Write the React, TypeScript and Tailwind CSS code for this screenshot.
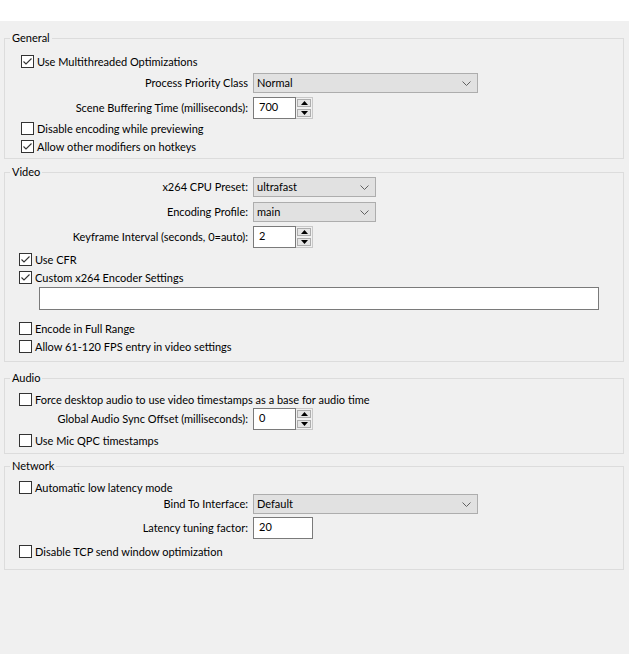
import React from "react";

function Check({ checked, label, className = "" }: { checked?: boolean; label: string; className?: string }) {
  return (
    <div className={`flex h-[13px] items-center gap-[3px] ${className}`}>
      <span className="flex h-[13px] w-[13px] shrink-0 items-center justify-center border border-[#333333] bg-white">
        {checked && (
          <svg width="11" height="11" viewBox="0 0 11 11">
            <path d="M1.5 5.5 L4 8 L9.5 2.5" fill="none" stroke="#333333" strokeWidth="1.1" />
          </svg>
        )}
      </span>
      <span className="whitespace-nowrap leading-[13px]">{label}</span>
    </div>
  );
}

function Row({ label, children, className = "" }: { label: string; children: React.ReactNode; className?: string }) {
  return (
    <div className={`flex h-fit items-center ${className}`}>
      <div className="w-[243px] whitespace-nowrap text-right leading-[14px]">{label}</div>
      <div className="ml-[5px] flex">{children}</div>
    </div>
  );
}

function Combo({ value, wide }: { value: string; wide?: boolean }) {
  return (
    <div
      className={`flex h-[20px] items-center justify-between border border-[#adadad] bg-[#e1e1e1] pl-[3px] pr-[6px] ${
        wide ? "w-[225px]" : "w-[123px]"
      }`}
    >
      <span>{value}</span>
      <svg width="9" height="5" viewBox="0 0 9 5">
        <path d="M0.5 0.5 L4.5 4.5 L8.5 0.5" fill="none" stroke="#606060" strokeWidth="1" />
      </svg>
    </div>
  );
}

function Spin({ value }: { value: string }) {
  return (
    <div className="flex h-[22px] w-[60px]">
      <div className="flex w-[43px] items-start border border-[#7a7a7a] bg-white pl-[5px] pt-[2px]">{value}</div>
      <div className="flex w-[17px] flex-col gap-[2px] border border-l-0 border-[#c8c8c8] bg-[#f0f0f0] p-[1px]">
        <div className="flex flex-1 items-center justify-center border border-[#adadad] bg-[#e5e5e5]">
          <svg width="7" height="4" viewBox="0 0 7 4">
            <path d="M3.5 0 L7 4 L0 4 Z" fill="#000" />
          </svg>
        </div>
        <div className="flex flex-1 items-center justify-center border border-[#adadad] bg-[#e5e5e5]">
          <svg width="7" height="4" viewBox="0 0 7 4">
            <path d="M0 0 L7 0 L3.5 4 Z" fill="#000" />
          </svg>
        </div>
      </div>
    </div>
  );
}

function Group({ title, className = "", children }: { title: string; className?: string; children: React.ReactNode }) {
  return (
    <fieldset className={`ml-[4px] w-[620px] border border-[#dcdcdc] ${className}`}>
      <legend className="ml-[5px] px-[2px] leading-[10px]">{title}</legend>
      {children}
    </fieldset>
  );
}

export default function App() {
  return (
    <div className="flex h-[654px] w-[629px] flex-col bg-[#f0f0f0] font-['Lato',sans-serif] text-[11px] leading-[14px] text-black">
      <div className="h-[21px] bg-white" />

      {/* General */}
      <Group title="General" className="mt-[12px] pb-[5px]">
        <Check checked label="Use Multithreaded Optimizations" className="ml-[16px] mt-[12px]" />
        <Row label="Process Priority Class" className="mt-[5px]">
          <Combo value="Normal" wide />
        </Row>
        <Row label="Scene Buffering Time (milliseconds):" className="mt-[4px]">
          <Spin value="700" />
        </Row>
        <Check label="Disable encoding while previewing" className="ml-[16px] mt-[3px]" />
        <Check checked label="Allow other modifiers on hotkeys" className="ml-[16px] mt-[5px]" />
      </Group>

      {/* Video */}
      <Group title="Video" className="mt-[8px] pb-[8px]">
        <Row label="x264 CPU Preset:">
          <Combo value="ultrafast" />
        </Row>
        <Row label="Encoding Profile:" className="mt-[5px]">
          <Combo value="main" />
        </Row>
        <Row label="Keyframe Interval (seconds, 0=auto):" className="mt-[4px]">
          <Spin value="2" />
        </Row>
        <Check checked label="Use CFR" className="ml-[14px] mt-[5px]" />
        <Check checked label="Custom x264 Encoder Settings" className="ml-[14px] mt-[5px]" />
        <div className="ml-[34px] mt-[3px] h-[23px] w-[560px] border border-[#7a7a7a] bg-white" />
        <Check label="Encode in Full Range" className="ml-[14px] mt-[12px]" />
        <Check label="Allow 61-120 FPS entry in video settings" className="ml-[14px] mt-[5px]" />
      </Group>

      {/* Audio */}
      <Group title="Audio" className="mt-[11px] pb-[6px]">
        <Check label="Force desktop audio to use video timestamps as a base for audio time" className="ml-[14px] mt-[10px]" />
        <Row label="Global Audio Sync Offset (milliseconds):" className="mt-[2px]">
          <Spin value="0" />
        </Row>
        <Check label="Use Mic QPC timestamps" className="ml-[14px] mt-[4px]" />
      </Group>

      {/* Network */}
      <Group title="Network" className="mt-[7px] pb-[11px]">
        <Check label="Automatic low latency mode" className="ml-[14px] mt-[10px]" />
        <Row label="Bind To Interface:">
          <Combo value="Default" wide />
        </Row>
        <Row label="Latency tuning factor:" className="mt-[3px]">
          <div className="flex h-[22px] w-[60px] items-start border border-[#7a7a7a] bg-white pl-[5px] pt-[2px]">20</div>
        </Row>
        <Check label="Disable TCP send window optimization" className="ml-[14px] mt-[6px]" />
      </Group>
    </div>
  );
}
